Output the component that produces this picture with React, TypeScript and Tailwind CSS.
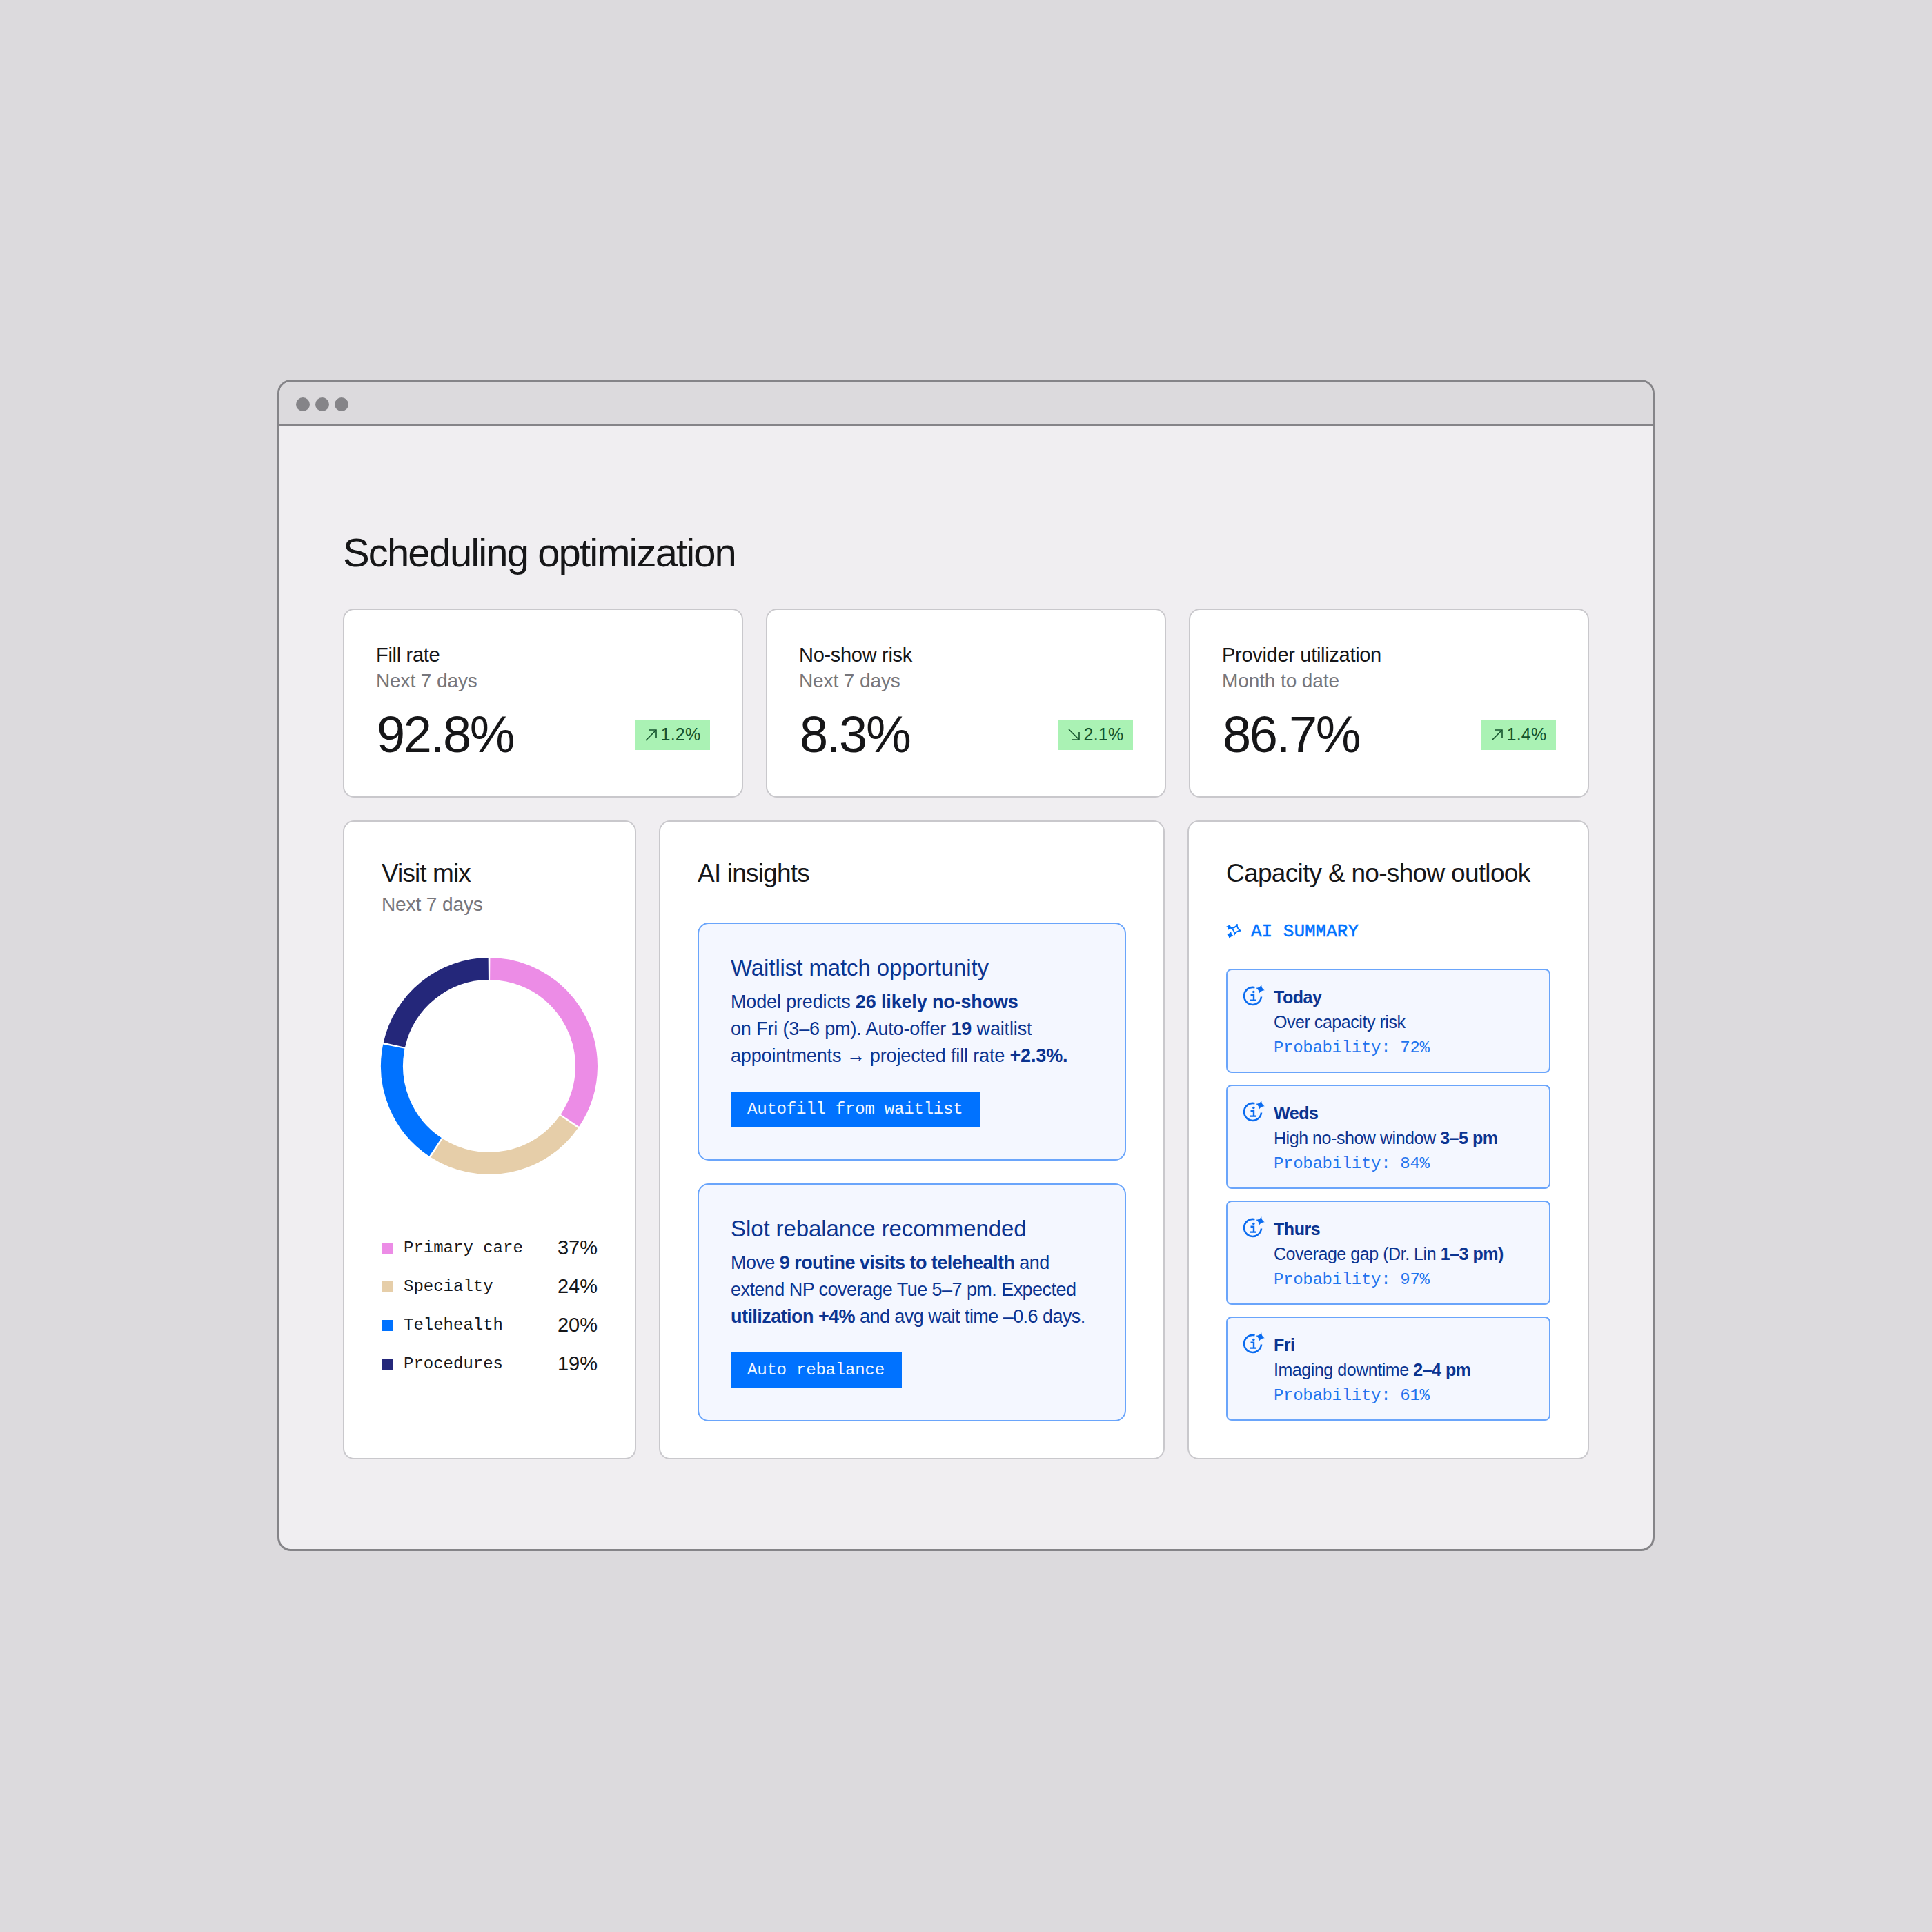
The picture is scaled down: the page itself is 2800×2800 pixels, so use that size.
const sans = "font-['Liberation_Sans','Arial',sans-serif]"
const mono = "font-['Liberation_Mono','Courier_New',monospace]"

const metrics = [
  { label: 'Fill rate', sub: 'Next 7 days', value: '92.8%', delta: '1.2%', up: true },
  { label: 'No-show risk', sub: 'Next 7 days', value: '8.3%', delta: '2.1%', up: false },
  { label: 'Provider utilization', sub: 'Month to date', value: '86.7%', delta: '1.4%', up: true },
]

const mix = [
  { name: 'Primary care', pct: '37%', color: 'bg-[#ec8ce6]' },
  { name: 'Specialty', pct: '24%', color: 'bg-[#e6cea9]' },
  { name: 'Telehealth', pct: '20%', color: 'bg-[#0072ff]' },
  { name: 'Procedures', pct: '19%', color: 'bg-[#24277a]' },
]

// degrees clockwise from 12 o'clock
const arcs = [
  { from: 0.5, to: 124, stroke: '#ec8ce6' },
  { from: 125, to: 212.6, stroke: '#e6cea9' },
  { from: 213.6, to: 281.6, stroke: '#0072ff' },
  { from: 282.6, to: 359.5, stroke: '#24277a' },
]

const outlook = [
  { day: 'Today', text: <>Over capacity risk</>, prob: '72%' },
  { day: 'Weds', text: <>High no-show window <b className="font-bold">3–5 pm</b></>, prob: '84%' },
  { day: 'Thurs', text: <>Coverage gap (Dr. Lin <b className="font-bold">1–3 pm)</b></>, prob: '97%' },
  { day: 'Fri', text: <>Imaging downtime <b className="font-bold">2–4 pm</b></>, prob: '61%' },
]

function Arrow({ up }: { up: boolean }) {
  return (
    <svg width="20" height="20" viewBox="0 0 20 20" fill="none" stroke="#14532d" strokeWidth="1.6">
      {up ? <path d="M2 18 17 3M6 3h11v11" /> : <path d="M2 2l15 15M6 17h11V6" />}
    </svg>
  )
}

function Star({ x, y, r }: { x: number; y: number; r: number }) {
  const k = r * 0.22
  return (
    <path
      transform={`rotate(15 ${x} ${y})`}
      d={`M${x} ${y - r}Q${x + k} ${y - k} ${x + r} ${y}Q${x + k} ${y + k} ${x} ${y + r}Q${x - k} ${y + k} ${x - r} ${y}Q${x - k} ${y - k} ${x} ${y - r}Z`}
    />
  )
}

function Sparkles() {
  return (
    <svg width="22" height="22" viewBox="0 0 22 22" fill="#0072ff">
      <g fill="none" stroke="#0072ff" strokeWidth="1.8"><Star x={14} y={8} r={7} /></g>
      <Star x={4.5} y={4.5} r={4.5} />
      <Star x={5.8} y={16} r={5.5} />
    </svg>
  )
}

function InfoSpark() {
  return (
    <svg width="32" height="32" viewBox="0 0 32 32" fill="none" stroke="#0a6cf0" strokeWidth="2.6" className="shrink-0">
      <path d="M16.5 4.3A12.5 12.5 0 1 0 26 17.5" />
      <g fill="#0a6cf0" stroke="none"><Star x={24.5} y={6.5} r={6.5} /></g>
      <circle cx="14.8" cy="10.5" r="1.8" fill="#0a6cf0" stroke="none" />
      <path strokeWidth="2.4" d="M10.5 14.8h4.5v8M10 22.6h9" />
    </svg>
  )
}

function Card({ className, children }: { className: string; children: React.ReactNode }) {
  return <div className={`rounded-[16px] border-[2px] border-[#c9c8cc] bg-white ${className}`}>{children}</div>
}

function Insight({ title, lines, action, width, track }: { title: string; lines: React.ReactNode[]; action: string; width: string; track: string }) {
  return (
    <div className="h-[345px] rounded-[16px] border-[2px] border-[#6aa5fb] bg-[#f4f7ff] pl-[46px] pt-[46px] text-[#0b3490]">
      <h3 className="-mt-[4px] text-[33px] leading-[44px] tracking-[-0.1px]">{title}</h3>
      <div className={`mt-[8px] text-[27px] leading-[39px] ${track}`}>
        {lines.map((l, i) => <p key={i}>{l}</p>)}
      </div>
      <button className={`mt-[32px] h-[52px] bg-[#0072ff] pl-[24px] text-left text-[24px] tracking-[-0.2px] text-[#f4f7ff] ${mono} ${width}`}>{action}</button>
    </div>
  )
}

export default function App() {
  return (
    <div className={`flex min-h-[2800px] w-[2800px] justify-center bg-[#dcdadd] pt-[550px] text-[#161618] ${sans}`}>
      <div className="h-[1698px] w-[1996px] overflow-hidden rounded-[20px] border-[3px] border-[#858488] bg-[#f0eef1]">
        <div className="flex h-[65px] items-center gap-[8px] border-b-[3px] border-[#858488] bg-[#dcdadd] pl-[24px] pt-[3px]">
          <span className="h-[20px] w-[20px] rounded-full bg-[#858488]" />
          <span className="h-[20px] w-[20px] rounded-full bg-[#858488]" />
          <span className="h-[20px] w-[20px] rounded-full bg-[#858488]" />
        </div>

        <div className="px-[92px] pt-[145px]">
          <h1 className="text-[58px] leading-[76px] tracking-[-1.9px]">Scheduling optimization</h1>

          <div className="mt-[43px] grid grid-cols-3 gap-[33px]">
            {metrics.map(m => (
              <Card key={m.label} className="h-[274px] pl-[46px] pr-[46px] pt-[46px]">
                <div className="text-[29px] leading-[38px] tracking-[-0.3px]">{m.label}</div>
                <div className="text-[28px] leading-[38px] tracking-[-0.1px] text-[#77767b]">{m.sub}</div>
                <div className="mt-[16px] flex items-center justify-between">
                  <span className="ml-[1px] text-[74px] leading-[86px] tracking-[-2.3px]">{m.value}</span>
                  <span className="flex h-[43px] w-[109px] items-center justify-center gap-[4px] bg-[#aaf2b4] text-[25px] tracking-[0.2px] text-[#14532d]">
                    <Arrow up={m.up} />{m.delta}
                  </span>
                </div>
              </Card>
            ))}
          </div>

          <div className="mt-[33px] grid h-[926px] grid-cols-[425px_733px_582px] gap-[33px]">
            <Card className="pl-[54px] pr-[54px] pt-[51px]">
              <h2 className="text-[37px] leading-[48px] tracking-[-0.9px]">Visit mix</h2>
              <div className="mt-[2px] text-[28px] leading-[38px] tracking-[-0.1px] text-[#77767b]">Next 7 days</div>
              <svg width="316" height="316" viewBox="0 0 316 316" className="-ml-[2px] mt-[57px] block" fill="none">
                {arcs.map(a => (
                  <circle
                    key={a.stroke}
                    cx="158"
                    cy="158"
                    r="141"
                    pathLength={360}
                    stroke={a.stroke}
                    strokeWidth="32"
                    strokeDasharray={`${a.to - a.from} 360`}
                    transform={`rotate(${a.from - 90} 158 158)`}
                  />
                ))}
              </svg>
              <div className="mt-[87px] flex flex-col gap-[19px]">
                {mix.map(r => (
                  <div key={r.name} className="flex h-[37px] items-center">
                    <span className={`h-[16px] w-[16px] ${r.color}`} />
                    <span className={`ml-[16px] text-[24px] ${mono}`}>{r.name}</span>
                    <span className="ml-auto text-[29px]">{r.pct}</span>
                  </div>
                ))}
              </div>
            </Card>

            <Card className="pl-[54px] pr-[54px] pt-[51px]">
              <h2 className="text-[37px] leading-[48px] tracking-[-0.8px]">AI insights</h2>
              <div className="mt-[47px] flex flex-col gap-[33px]">
                <Insight
                  title="Waitlist match opportunity"
                  action="Autofill from waitlist"
                  width="w-[361px]"
                  track="tracking-[-0.15px]"
                  lines={[
                    <>Model predicts <b className="font-bold">26 likely no-shows</b></>,
                    <>on Fri (3–6 pm). Auto-offer <b className="font-bold">19</b> waitlist</>,
                    <>appointments → projected fill rate <b className="font-bold">+2.3%.</b></>,
                  ]}
                />
                <Insight
                  title="Slot rebalance recommended"
                  action="Auto rebalance"
                  width="w-[248px]"
                  track="tracking-[-0.55px]"
                  lines={[
                    <>Move <b className="font-bold">9 routine visits to telehealth</b> and</>,
                    <>extend NP coverage Tue 5–7 pm. Expected</>,
                    <><b className="font-bold">utilization +4%</b> and avg wait time –0.6 days.</>,
                  ]}
                />
              </div>
            </Card>

            <Card className="pl-[54px] pr-[54px] pt-[51px]">
              <h2 className="text-[37px] leading-[48px] tracking-[-0.7px]">Capacity &amp; no-show outlook</h2>
              <div className={`mt-[44px] flex h-[32px] items-center gap-[14px] text-[26px] text-[#0072ff] [-webkit-text-stroke:0.5px_#0072ff] ${mono}`}>
                <Sparkles />AI SUMMARY
              </div>
              <div className="mt-[38px] flex flex-col gap-[17px]">
                {outlook.map(o => (
                  <div key={o.day} className="flex h-[151px] gap-[12px] rounded-[8px] border-[2px] border-[#6aa5fb] bg-[#f4f7ff] pl-[23px] pt-[21px] text-[#0b3490]">
                    <InfoSpark />
                    <div className="tracking-[-0.45px]">
                      <div className="text-[25px] leading-[36px] font-bold">{o.day}</div>
                      <div className="text-[25px] leading-[37px]">{o.text}</div>
                      <div className={`text-[24px] leading-[38px] tracking-[-0.3px] text-[#1f74ee] ${mono}`}>Probability: {o.prob}</div>
                    </div>
                  </div>
                ))}
              </div>
            </Card>
          </div>
        </div>
      </div>
    </div>
  )
}
